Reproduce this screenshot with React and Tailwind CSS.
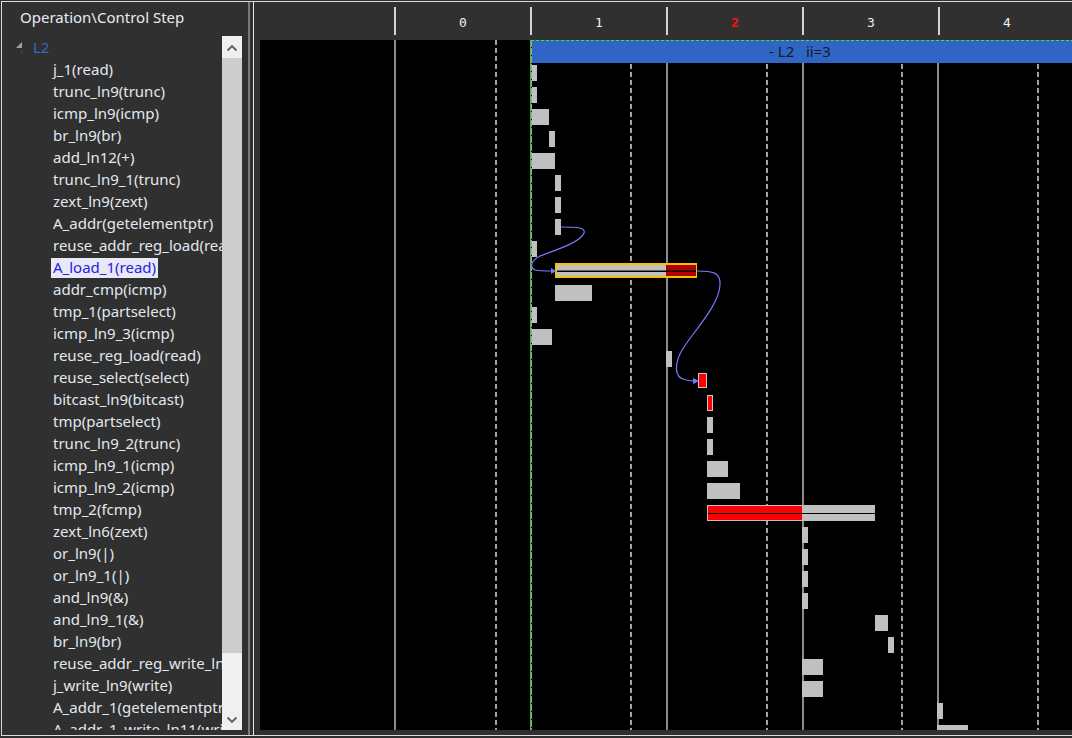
import React from "react";

const ops = [
  "j_1(read)",
  "trunc_ln9(trunc)",
  "icmp_ln9(icmp)",
  "br_ln9(br)",
  "add_ln12(+)",
  "trunc_ln9_1(trunc)",
  "zext_ln9(zext)",
  "A_addr(getelementptr)",
  "reuse_addr_reg_load(read)",
  "A_load_1(read)",
  "addr_cmp(icmp)",
  "tmp_1(partselect)",
  "icmp_ln9_3(icmp)",
  "reuse_reg_load(read)",
  "reuse_select(select)",
  "bitcast_ln9(bitcast)",
  "tmp(partselect)",
  "trunc_ln9_2(trunc)",
  "icmp_ln9_1(icmp)",
  "icmp_ln9_2(icmp)",
  "tmp_2(fcmp)",
  "zext_ln6(zext)",
  "or_ln9(|)",
  "or_ln9_1(|)",
  "and_ln9(&)",
  "and_ln9_1(&)",
  "br_ln9(br)",
  "reuse_addr_reg_write_ln9(write)",
  "j_write_ln9(write)",
  "A_addr_1(getelementptr)",
  "A_addr_1_write_ln11(write)",
];

// [row, x1, x2] in page coordinates
const grayBars = [
  [1, 531, 537],
  [2, 531, 537],
  [3, 531, 549],
  [4, 549, 555],
  [5, 531, 555],
  [6, 555, 561],
  [7, 555, 561],
  [8, 555, 561],
  [9, 531, 537],
  [11, 555, 592],
  [12, 531, 537],
  [13, 531, 552],
  [14, 666, 672],
  [17, 707, 713],
  [18, 707, 713],
  [19, 707, 728],
  [20, 707, 740],
  [22, 802, 808],
  [23, 802, 808],
  [24, 802, 808],
  [25, 802, 808],
  [26, 875, 888],
  [27, 888, 894],
  [28, 802, 823],
  [29, 802, 823],
  [30, 937, 943],
  [31, 937, 968],
];

const rowY = (r) => 65 + 22 * (r - 1);
const solidX = [394, 530, 666, 802, 937];
const dashX = [495, 630, 766, 901, 1037];
const steps = ["0", "1", "2", "3", "4"];

function Chevron({ up }) {
  return (
    <svg width="12" height="8" viewBox="0 0 12 8">
      <path
        d={up ? "M1.5 6.5 L6 2 L10.5 6.5" : "M1.5 1.5 L6 6 L10.5 1.5"}
        fill="none"
        stroke="#606060"
        strokeWidth="1.8"
      />
    </svg>
  );
}

function OpList() {
  return (
    <div className="flex h-[694px]">
      <div className="flex-1 overflow-hidden whitespace-nowrap text-[15px] text-[#e2e8ee]">
        <div className="flex h-[22px] items-center">
          <svg width="8" height="12" viewBox="0 0 8 12" className="ml-[14px]">
            <polygon points="6,1 6,7 0,7" fill="#a0a0a0" />
            <rect x="5" y="10" width="1" height="1" fill="#707070" />
          </svg>
          <span className="ml-[9px] leading-[18px] text-[#3566c8]">L2</span>
        </div>
        {ops.map((op, i) => (
          <div key={i} className="flex h-[22px] items-end pl-[49px]">
            <span
              className={
                i === 9
                  ? "h-[20px] bg-[#e8e8f6] px-[2px] leading-[18px] text-[#2424dc]"
                  : "h-[20px] px-[2px] leading-[18px]"
              }
            >
              {op}
            </span>
          </div>
        ))}
      </div>
      <div className="flex w-[20px] shrink-0 flex-col bg-[#f0f0f0] pt-px">
        <div className="flex h-[21px] items-center justify-center">
          <Chevron up />
        </div>
        <div className="h-[595px] bg-[#cdcdcd]" />
        <div className="flex flex-1 items-end justify-center pb-[6px]">
          <Chevron />
        </div>
      </div>
    </div>
  );
}

function Schedule() {
  return (
    <svg width="812" height="690" viewBox="0 0 812 690" className="block">
      <g transform="translate(-260,-40)">
        <rect x="260" y="40" width="812" height="690" fill="#000" />
        {solidX.map((x) => (
          <rect key={x} x={x} y="40" width="2" height="690" fill="#8c8c8c" />
        ))}
        {dashX.map((x) => (
          <line
            key={x}
            x1={x + 1}
            y1="40"
            x2={x + 1}
            y2="730"
            stroke="#a4a4a4"
            strokeWidth="2"
            strokeDasharray="5 3"
          />
        ))}
        <rect x="531" y="40" width="541" height="23" fill="#2f66c6" />
        <line x1="531" y1="40.5" x2="1072" y2="40.5" stroke="#3ee03e" strokeWidth="1" strokeDasharray="3 2" />
        <text
          x="800"
          y="57"
          textAnchor="middle"
          className="whitespace-pre"
          fontFamily="'Noto Sans', sans-serif"
          fontSize="15"
          fill="#1a1a1a"
        >
          {"- L2   ii=3"}
        </text>

        {grayBars.map(([r, x1, x2]) => (
          <rect key={r} x={x1} y={rowY(r)} width={x2 - x1} height="16" fill="#c0c0c0" />
        ))}

        {/* A_load_1 */}
        <rect x="555" y="263" width="142" height="15" fill="#f2c200" />
        <rect x="557" y="265" width="109" height="11" fill="#c0c0c0" />
        <rect x="666" y="265" width="30" height="11" fill="#b00000" />
        <rect x="557" y="270.5" width="139" height="1.5" fill="#000" />

        {/* reuse_select, bitcast */}
        <rect x="698" y="373" width="9" height="15" fill="#c8c8c8" />
        <rect x="699" y="374" width="7" height="13" fill="#ff0000" />
        <rect x="707" y="395" width="6" height="16" fill="#c8c8c8" />
        <rect x="708" y="396" width="4" height="14" fill="#ff0000" />

        {/* tmp_2 */}
        <rect x="707" y="505" width="168" height="16" fill="#c0c0c0" />
        <rect x="708" y="506" width="94" height="14" fill="#ff0000" />
        <rect x="708" y="513" width="167" height="1" fill="#000" />

        <rect x="531" y="40" width="1" height="690" fill="#000" />
        <line x1="531.5" y1="40" x2="531.5" y2="730" stroke="#3ee03e" strokeWidth="1" strokeDasharray="7 1" />

        {/* dependency curves */}
        <path
          d="M561 227 C575 227 586 227 584 233 C581 242 556 250 540 256 C530 261 530 268 535 270 C539 271 546 271 552 271"
          fill="none"
          stroke="#7878ff"
          strokeWidth="1.2"
        />
        <polygon points="551,268 556,271 551,274" fill="#7878ff" />
        <path
          d="M697 271 C712 271 721 272 720 285 C719 305 695 330 684 347 C674 362 673 378 686 380 C690 381 693 381 696 381"
          fill="none"
          stroke="#7878ff"
          strokeWidth="1.2"
        />
        <polygon points="693,378 699,381 693,384" fill="#7878ff" />
      </g>
    </svg>
  );
}

export default function App() {
  return (
    <div className="h-[738px] w-[1072px] overflow-hidden bg-[#303030] pl-px pt-px font-['Noto_Sans',sans-serif]">
      <div className="flex h-[735px] border-y border-l border-[#dcdcdc]">
        <div className="flex w-[248px] shrink-0 flex-col border-r-2 border-[#7a7a7a] pr-[6px]">
          <div className="flex h-[34px] items-center pb-[4px] pl-[18px] text-[15px] text-[#e8ecf0]">
            Operation\Control Step
          </div>
          <OpList />
        </div>
        <div className="ml-[3px] flex flex-1 flex-col border-l border-[#e8e8e8]">
          <div className="flex h-[38px] shrink-0">
            <div className="w-[140px] shrink-0" />
            {steps.map((s) => (
              <div key={s} className="flex w-[136px] shrink-0">
                <div className="mt-[5px] h-[28px] w-[2px] bg-[#d4d4d4]" />
                <div
                  className={
                    s === "2"
                      ? "flex flex-1 items-center justify-center pt-[4px] font-['DejaVu_Sans_Mono',monospace] text-[13px] font-bold text-[#ff1010]"
                      : "flex flex-1 items-center justify-center pt-[4px] font-['DejaVu_Sans_Mono',monospace] text-[13px] text-[#f0f0f0]"
                  }
                >
                  {s}
                </div>
              </div>
            ))}
          </div>
          <div className="pl-[6px]">
            <Schedule />
          </div>
        </div>
      </div>
    </div>
  );
}
